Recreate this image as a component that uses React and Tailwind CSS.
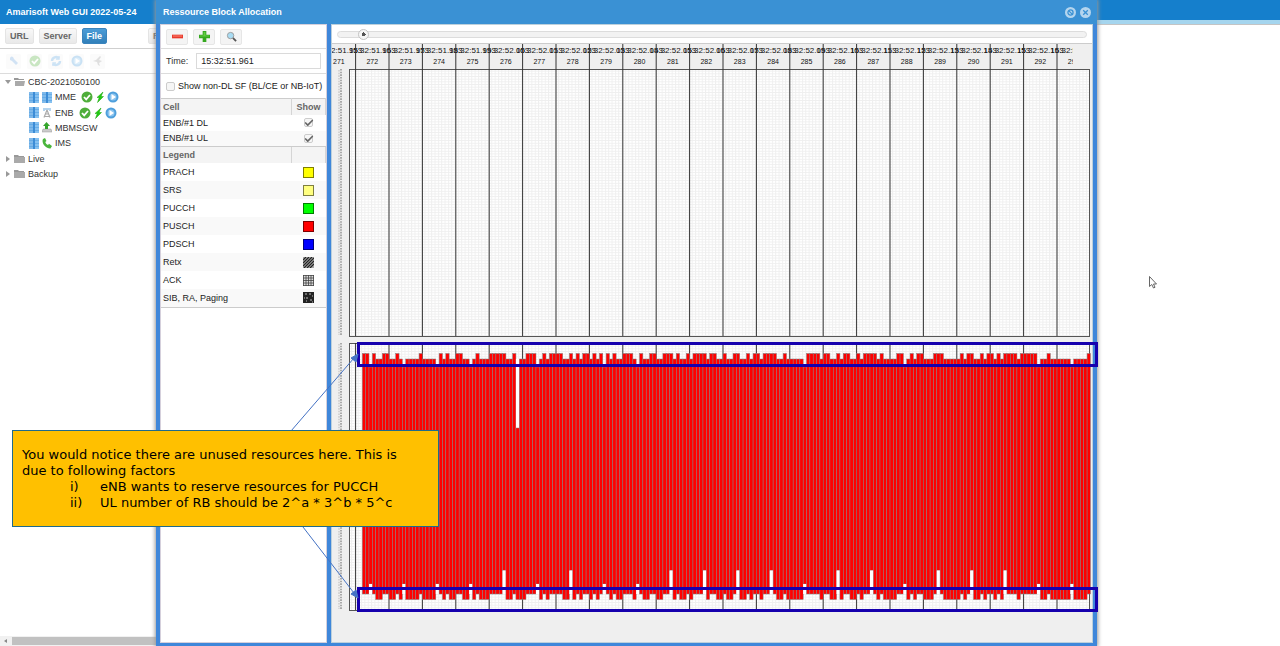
import { useState } from "react";
import { Check } from "lucide-react";

// H = starts high, M = one step lower, L = small allocation, G = gap
const ALLOCATION = [
  "HHLHMMHHMM",
  "HMLMMMMHMM",
  "MMLHMHMMHH",
  "MMLMHMMMHH",
  "HHHMMHGMMH",
  "HHLMHMHHHH",
  "MMHMHMHHMH",
  "MHLHMHMMHH",
  "HMLHMMHHMM",
  "HHHMHMMHMH",
  "HHHMHHMMHM",
  "MHHMMHMHHM",
  "HHHHMMHMMM",
  "MMLHHHHMHH",
  "MMHMHHMMHM",
  "HHHHMHMMMM",
  "HHLMHMHHMM",
  "MHHHMMMMMH",
  "MHHMMHMHHM",
  "HMHHHHMHHH",
  "HHLMMHMMMM",
  "MMLMMMMH",
].join("");

const TALL_NOTCHES = [42, 62, 92, 102, 112, 122, 142, 152, 172, 182, 192];

const SLOT = 3.34;
const FRAME = 33.4;
const FIRST_FRAME_X = 24.6;

const legend = [
  { name: "PRACH", swatch: "bg-[#ffff00]" },
  { name: "SRS", swatch: "bg-[#ffff80]" },
  { name: "PUCCH", swatch: "bg-[#00ff00]" },
  { name: "PUSCH", swatch: "bg-[#ff0000]" },
  { name: "PDSCH", swatch: "bg-[#0000ff]" },
  { name: "Retx", pattern: "retx" },
  { name: "ACK", pattern: "ack" },
  { name: "SIB, RA, Paging", pattern: "sib" },
];

const frames = Array.from({ length: 23 }, (_, i) => {
  const ms = 51953 + i * 10;
  return {
    number: 271 + i,
    time: `15:32:${Math.floor(ms / 1000)}.${String(ms % 1000).padStart(3, "0")}`,
    x: FIRST_FRAME_X + (i - 0.5) * FRAME,
  };
});

export default function App() {
  return (
    <div className="relative min-h-screen flex overflow-hidden bg-white font-['Liberation_Sans',Arial,sans-serif] text-[9px] leading-3 text-[#333]">
      <Sidebar />
      <main className="flex-1">
        <div className="h-5 bg-[#157fcc]" />
        <div className="h-1 bg-[#a5d5ee]" />
        <div className="h-px bg-[#c4c4c4]" />
      </main>
      <AllocationWindow />
      <Annotations />
    </div>
  );
}

function Sidebar() {
  return (
    <aside className="w-[158px] shrink-0 flex flex-col">
      <h1 className="h-6 bg-[#157fcc] px-[6px] pt-[6px] font-bold text-white whitespace-nowrap">
        Amarisoft Web GUI 2022-05-24
      </h1>
      <div className="h-[25px] flex items-center gap-[5px] pl-[5px] border-b border-[#cfcfcf] overflow-hidden">
        <SourceButton>URL</SourceButton>
        <SourceButton>Server</SourceButton>
        <SourceButton active>File</SourceButton>
        <span className="w-[31px] shrink-0" />
        <SourceButton>Refresh</SourceButton>
      </div>
      <div className="h-[25px] flex items-center gap-[6px] pl-[6px] border-b border-[#dcdcdc]">
        <FadedButton label="Configure">
          <svg viewBox="0 0 12 12" className="size-3">
            <path d="M2 3a2 2 0 0 1 3-1l1 2 4 4-2 2-4-4-2-1z" fill="#6ba3dc" />
          </svg>
        </FadedButton>
        <FadedButton label="Enable">
          <OkIcon />
        </FadedButton>
        <FadedButton label="Reload">
          <svg viewBox="0 0 12 12" className="size-3" fill="none" stroke="#5aa4e0" strokeWidth="2.4">
            <path d="M2 6a4 4 0 0 1 7-2.6M10 6a4 4 0 0 1-7 2.6" />
            <path d="M9 1v3H6M3 11V8h3" strokeWidth="1.4" />
          </svg>
        </FadedButton>
        <FadedButton label="Start">
          <PlayIcon />
        </FadedButton>
        <FadedButton label="Plug">
          <svg viewBox="0 0 12 12" className="size-3">
            <path d="M1 6l3-1 4-4 1 1-2 3 3 1-3 2 1 3-2-1-1-3z" fill="#999" />
          </svg>
        </FadedButton>
      </div>

      <ul className="grid h-[108px] pl-[5px] items-center whitespace-nowrap">
        <Folder name="CBC-2021050100" open />
        <Leaf name="MME" icon={<ServerIcon />} running />
        <Leaf name="ENB" icon={<AntennaIcon />} running />
        <Leaf name="MBMSGW" icon={<DownloadIcon />} />
        <Leaf name="IMS" icon={<PhoneIcon />} />
        <Folder name="Live" />
        <Folder name="Backup" />
      </ul>

      <div className="mt-auto h-[10px] flex items-center bg-[#f1f1f1]">
        <svg viewBox="0 0 12 10" className="w-3 h-[10px]">
          <path d="M7 3v4L4 5z" fill="#888" />
        </svg>
        <div className="flex-1 h-2 bg-[#c1c1c1]" />
      </div>
    </aside>
  );
}

function SourceButton({ active, children }) {
  return (
    <button
      type="button"
      className={`h-4 px-1 shrink-0 rounded-xs border font-bold leading-none ${
        active
          ? "bg-linear-to-b from-[#4b9cd7] to-[#3180ba] border-[#3a84bd] text-white"
          : "bg-linear-to-b from-[#f8f8f8] to-[#e9e9e9] border-[#e4e4e4] text-[#666]"
      }`}
    >
      {children}
    </button>
  );
}

function FadedButton({ label, children }) {
  return (
    <button
      type="button"
      aria-label={label}
      className="size-[15px] flex items-center justify-center rounded-xs bg-[#f2f2f2] opacity-30"
    >
      {children}
    </button>
  );
}

function Folder({ name, open }) {
  return (
    <li className="flex items-center gap-[3px]">
      <svg viewBox="0 0 6 6" className="size-[6px]">
        <path d={open ? "M0 1h6L3 5z" : "M1 0v6l4-3z"} fill="#999" />
      </svg>
      <svg viewBox="0 0 11 10" className="w-[11px] h-[10px]">
        <path d="M0 1h4l1 1h5v1H0z" fill="#999" />
        <path d={open ? "M1 4h10l-1 5H1z" : "M0 3h11v6H0z"} fill="#aaa" />
      </svg>
      {name}
    </li>
  );
}

function Leaf({ name, icon, running }) {
  return (
    <li className="flex items-center gap-[3px] pl-6">
      <ServerIcon />
      {icon}
      {name}
      {running && (
        <span className="flex items-center gap-px pl-[2px]">
          <OkIcon />
          <svg viewBox="0 0 12 12" className="size-3">
            <path d="M9 1L3 6.500h2.200L3.500 11.500 9.500 5.500H7z" fill="#22cc11" stroke="#14a30b" strokeWidth=".5" />
          </svg>
          <PlayIcon />
        </span>
      )}
    </li>
  );
}

function ServerIcon() {
  return (
    <svg viewBox="0 0 10 11" className="w-[10px] h-[11px]">
      <path d="M0 0h4v11H0z" fill="#7fb9ea" />
      <path d="M4 0h2v11H4z" fill="#3c8cd6" />
      <path d="M6 0h4v11H6z" fill="#86c1f0" />
      <path d="M0 2.500h4M6 2.500h4M0 5.500h4M6 5.500h4M0 8.500h4M6 8.500h4" stroke="#5ba5e2" strokeWidth=".7" />
    </svg>
  );
}

function AntennaIcon() {
  return (
    <svg viewBox="0 0 10 11" className="w-[10px] h-[11px]" fill="none">
      <path d="M2 1v3M8 1v3M4 1v2M6 1v2" stroke="#6aa9dd" />
      <path d="M5 3L2 10.500M5 3l3 7.500M3.500 7h3M2.500 9.500h5" stroke="#aaa" strokeWidth="1.200" />
    </svg>
  );
}

function DownloadIcon() {
  return (
    <svg viewBox="0 0 10 11" className="w-[10px] h-[11px]">
      <path d="M1 7h8l1 3H0z" fill="#ccc" stroke="#999" strokeWidth=".5" />
      <path d="M3 7h3V4h2L4.500 0 1 4h2z" fill="#35a52c" />
    </svg>
  );
}

function PhoneIcon() {
  return (
    <svg viewBox="0 0 10 11" className="w-[10px] h-[11px]">
      <path d="M1 1l2-1 1.500 3-1.200 1c.5 1.500 1.500 2.500 2.700 3l1-1.200L10 8 8.500 10.500C4 11-1 5 1 1z" fill="#4bb53c" />
    </svg>
  );
}

function OkIcon() {
  return (
    <svg viewBox="0 0 12 12" className="size-3">
      <circle cx="6" cy="6" r="5.500" fill="#4fae3a" />
      <path d="M3 6l2.200 2.300L9 4" fill="none" stroke="#fff" strokeWidth="1.800" />
    </svg>
  );
}

function PlayIcon() {
  return (
    <svg viewBox="0 0 12 12" className="size-3">
      <circle cx="6" cy="6" r="5.500" fill="#4e9fdc" />
      <circle cx="6" cy="6" r="3.500" fill="#8cc4ee" />
      <path d="M4.500 3v6L9 6z" fill="#fff" />
    </svg>
  );
}

function AllocationWindow() {
  return (
    <section className="absolute inset-y-0 left-[156px] right-[183px] flex flex-col bg-[#3f87da] shadow-[0_0_4px_1px_#999]">
      <header className="h-6 shrink-0 flex items-center gap-1 pl-[7px] pr-[6px] bg-[#3a91d4] text-white">
        <h2 className="flex-1 font-bold">Ressource Block Allocation</h2>
        <HeaderButton label="Disable">
          <circle cx="6" cy="6" r="2.800" />
          <path d="M4 4l4 4" />
        </HeaderButton>
        <HeaderButton label="Close">
          <path d="M3.500 3.500l5 5M8.500 3.500l-5 5" />
        </HeaderButton>
      </header>
      <div className="flex-1 min-h-0 flex gap-1 px-1 pb-[3px]">
        <Settings />
        <div className="flex-1 min-w-0 flex flex-col bg-[#efefef] border border-[#bcd0dc]">
          <TimeSlider />
          <Chart />
        </div>
      </div>
    </section>
  );
}

function HeaderButton({ label, children }) {
  return (
    <button type="button" aria-label={label}>
      <svg viewBox="0 0 12 12" className="size-[11px]" fill="none" stroke="#3a91d4" strokeWidth="1.400">
        <circle cx="6" cy="6" r="6" fill="#b4d5ee" stroke="none" />
        {children}
      </svg>
    </button>
  );
}

function Settings() {
  const [time, setTime] = useState("15:32:51.961");
  const [nonDl, setNonDl] = useState(false);

  return (
    <div className="w-[167px] shrink-0 bg-white border border-[#d5d0dc]">
      <div className="h-6 flex items-center gap-[5px] pl-[5px] border-b border-[#dcdcdc]">
        <ToolButton label="Zoom out">
          <path d="M0 4h12v4H0z" fill="#e83a2c" />
          <path d="M1 5h10v1H1z" fill="#ff8a78" />
        </ToolButton>
        <ToolButton label="Zoom in">
          <path d="M4 0h4v4h4v4H8v4H4V8H0V4h4z" fill="#35a81f" />
          <path d="M5 1h2v4h4v1H1V5h4z" fill="#62cc42" />
        </ToolButton>
        <ToolButton label="Search">
          <path d="M7 7l4 4" stroke="#555" strokeWidth="2" />
          <circle cx="5" cy="5" r="3.500" fill="#a9dcf3" stroke="#999" strokeWidth="1" />
        </ToolButton>
      </div>
      <div className="h-[25px] flex items-center gap-2 px-[5px] border-b border-[#dcdcdc]">
        <label htmlFor="time">Time:</label>
        <input
          id="time"
          type="text"
          value={time}
          onChange={(e) => setTime(e.target.value)}
          className="flex-1 min-w-0 h-4 px-1 border border-[#dadada] text-[#222] outline-none"
        />
      </div>
      <div className="h-6 flex items-center gap-[3px] pl-[5px] text-[#222] whitespace-nowrap">
        <input
          id="non-dl"
          type="checkbox"
          checked={nonDl}
          onChange={(e) => setNonDl(e.target.checked)}
          className="size-[9px] appearance-none rounded-xs border border-[#ccc] bg-[#f6f6f6] checked:bg-[#777]"
        />
        <label htmlFor="non-dl">Show non-DL SF (BL/CE or NB-IoT)</label>
      </div>

      <table className="w-full table-fixed border-b border-[#ccc]">
        <thead className="bg-[#f4f4f4] text-[#666]">
          <tr className="h-4 border-t border-[#ccc]">
            <th className="pl-[2px] text-left">Cell</th>
            <th className="w-[34px] border-x border-[#d5d5d5]">Show</th>
          </tr>
        </thead>
        <tbody>
          <CellRow name="ENB/#1 DL" />
          <CellRow name="ENB/#1 UL" />
        </tbody>
      </table>

      <table className="w-full table-fixed border-b border-[#ccc]">
        <thead className="bg-[#f4f4f4] text-[#666]">
          <tr className="h-4">
            <th className="pl-[2px] text-left">Legend</th>
            <td className="w-[34px] border-x border-[#d5d5d5]" />
          </tr>
        </thead>
        <tbody>
          {legend.map((item) => (
            <tr key={item.name} className="h-[18px] even:bg-[#f9f9f9] text-[#222]">
              <td className="pl-[2px]">{item.name}</td>
              <td>
                {item.pattern ? (
                  <PatternSwatch type={item.pattern} />
                ) : (
                  <div className={`size-[11px] mx-auto border border-black/50 ${item.swatch}`} />
                )}
              </td>
            </tr>
          ))}
        </tbody>
      </table>
    </div>
  );
}

function ToolButton({ label, children }) {
  return (
    <button
      type="button"
      aria-label={label}
      className="w-[22px] h-4 flex items-center justify-center rounded-xs border border-[#e6e6e6] bg-[#f4f4f4]"
    >
      <svg viewBox="0 0 12 12" className="size-[11px]">
        {children}
      </svg>
    </button>
  );
}

function CellRow({ name }) {
  const [show, setShow] = useState(true);

  return (
    <tr className="h-4 even:bg-[#f9f9f9] text-[#222]">
      <td className="pl-[2px]">{name}</td>
      <td>
        <label className="relative block size-[9px] mx-auto">
          <input
            type="checkbox"
            aria-label={`Show ${name}`}
            checked={show}
            onChange={(e) => setShow(e.target.checked)}
            className="block size-[9px] appearance-none rounded-xs border border-[#ccc] bg-[#f6f6f6]"
          />
          {show && (
            <Check className="absolute inset-0 size-[10px] text-[#666] pointer-events-none" strokeWidth={4} />
          )}
        </label>
      </td>
    </tr>
  );
}

function PatternSwatch({ type }) {
  return (
    <svg viewBox="0 0 11 11" className="size-[11px] mx-auto">
      {type === "retx" && (
        <>
          <rect width="11" height="11" fill="#aaa" />
          <path d="M0 3l3-3M0 6l6-6M0 9l9-9M1 11L11 1M4 11l7-7M7 11l4-4" stroke="#222" strokeWidth="1.200" />
        </>
      )}
      {type === "ack" && (
        <>
          <rect width="11" height="11" fill="#ddd" />
          <path
            d="M.5 0v11M3 0v11M5.500 0v11M8 0v11M10.500 0v11M0 .5h11M0 3h11M0 5.500h11M0 8h11M0 10.500h11"
            stroke="#444"
            strokeWidth=".8"
          />
        </>
      )}
      {type === "sib" && (
        <>
          <rect width="11" height="11" fill="#222" />
          <path d="M2 2h2M7 1v2M9 4h1M1 6h1M4 5v2M7 8h2M3 9h1M9 10h1" stroke="#bbb" />
        </>
      )}
    </svg>
  );
}

function TimeSlider() {
  const [position, setPosition] = useState(27);

  return (
    <div className="h-[19px] shrink-0 flex items-center px-[5px] bg-white border-b border-[#ccc]">
      <input
        type="range"
        aria-label="Time position"
        min="0"
        max="1000"
        value={position}
        onChange={(e) => setPosition(Number(e.target.value))}
        className="w-full h-[7px] appearance-none rounded-full border border-[#dcdcdc] bg-[#f2f2f2] [&::-webkit-slider-thumb]:appearance-none [&::-webkit-slider-thumb]:size-[11px] [&::-webkit-slider-thumb]:rounded-full [&::-webkit-slider-thumb]:border [&::-webkit-slider-thumb]:border-[#c4c4c4] [&::-webkit-slider-thumb]:bg-[radial-gradient(circle,#555_0_2px,#f6f6f6_2px)]"
      />
    </div>
  );
}

function Chart() {
  // origin of the drawing: left edge of the panel, just under the slider
  return (
    <svg width="759" height="568" viewBox="1 0 759 568" className="shrink-0">
      <defs>
        <pattern id="rb" width={SLOT} height="2.670" patternUnits="userSpaceOnUse">
          <rect width={SLOT} height="2.670" fill="#fff" />
          <path d={`M0 .5H${SLOT}M.5 0V2.670`} stroke="#efefef" strokeWidth=".9" />
        </pattern>
        <clipPath id="labels">
          <rect x="0" y="0" width="742" height="25" />
        </clipPath>
      </defs>

      <g clipPath="url(#labels)" textAnchor="middle" fill="#111">
        {frames.map((f) => (
          <g key={f.number}>
            <text x={f.x} y="9" fontSize="8">
              {f.time}
            </text>
            <text x={f.x} y="20" fontSize="7">
              {f.number}
            </text>
          </g>
        ))}
      </g>

      <Cell y={25} />
      <Cell y={299} />
      <Bars />
      {frames.slice(1).map((f) => (
        <path key={f.number} d={`M${f.x - FRAME / 2} 0V25`} stroke="#333" />
      ))}
    </svg>
  );
}

function Cell({ y }) {
  return (
    <g>
      <path d={`M10 ${y}v267`} stroke="#aaa" strokeWidth="2" strokeDasharray="1.600 1.070" />
      <path d={`M8 ${y + 1}v265`} stroke="#d4d4d4" strokeWidth="2" strokeDasharray="1.600 1.070" />
      <rect x="18.500" y={y + 0.5} width="740" height="267" fill="url(#rb)" stroke="#555" />
      {frames.slice(1).map((f) => (
        <path key={f.number} d={`M${f.x - FRAME / 2} ${y}v267`} stroke="#333" />
      ))}
    </g>
  );
}

function Bars() {
  return (
    <g>
      {[...ALLOCATION].map((level, i) => {
        const x = 31.3 + i * SLOT;
        const top = { H: 309.5, M: 315, L: 323, G: 384 }[level];
        let bottom = level === "H" ? 550 : 555.5;
        if (level === "L") bottom = 540;
        if (TALL_NOTCHES.includes(i)) bottom = 526.5;

        return (
          <g key={i}>
            {level === "G" && <rect x={x} y="315" width={SLOT} height="70" fill="#fff" />}
            <rect x={x} y={top} width={SLOT} height={bottom - top} fill="#f00" stroke="#808080" strokeWidth=".5" />
            {bottom < 545 && <rect x={x} y={bottom} width={SLOT} height={550 - bottom} fill="#fff" />}
          </g>
        );
      })}
    </g>
  );
}

function Annotations() {
  return (
    <>
      <div className="absolute top-[342px] left-[357px] right-[182px] h-[25px] border-3 border-[#1600ae]" />
      <div className="absolute top-[587px] left-[357px] right-[182px] h-[25px] border-3 border-[#1600ae]" />
      <svg width="80" height="180" viewBox="280 425 80 180" className="absolute top-[425px] left-[280px] overflow-visible">
        <g stroke="#4472c4" fill="#4472c4">
          <path d="M291 431L354 358M303 527l51 66" />
          <path d="M358 354l-7 4 5 4zM358 598l-2-8-5 4z" />
        </g>
      </svg>
      <div className="absolute top-[430px] left-[12px] w-[427px] h-[97px] pl-[9px] pr-6 pt-4 border border-[#1f6b8c] bg-[#ffc000] font-['DejaVu_Sans',Verdana,sans-serif] text-[13px] leading-4 text-black">
        <p>You would notice there are unused resources here. This is due to following factors</p>
        <ul className="pl-12 whitespace-nowrap">
          <li className="flex">
            <span className="w-[30px]">i)</span>eNB wants to reserve resources for PUCCH
          </li>
          <li className="flex">
            <span className="w-[30px]">ii)</span>UL number of RB should be 2^a * 3^b * 5^c
          </li>
        </ul>
      </div>
      <svg width="8" height="13" viewBox="0 0 8 13" className="absolute top-[276px] left-[1149px]">
        <path d="M.5.5v10l2.300-2 1.700 3.500 1.500-.7L4.500 8h3z" fill="#fff" stroke="#555" strokeWidth=".9" />
      </svg>
    </>
  );
}
